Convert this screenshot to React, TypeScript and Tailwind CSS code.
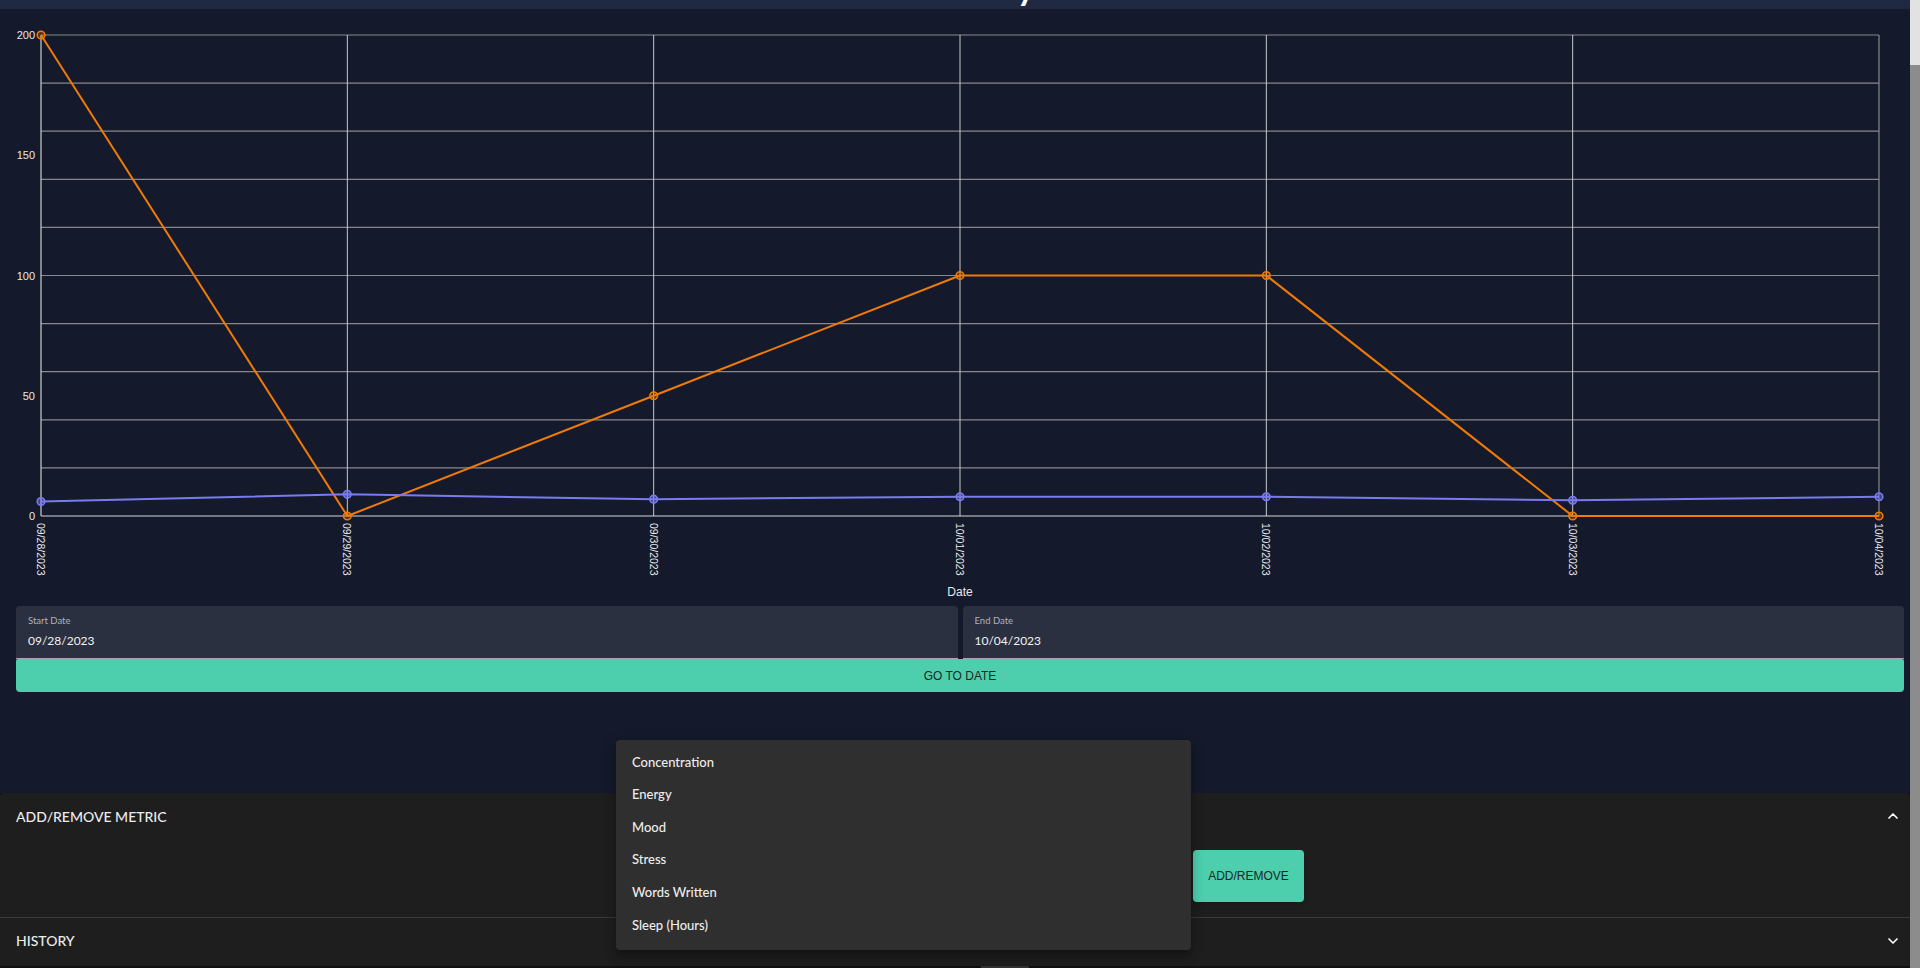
import { ChevronDown, ChevronUp } from "lucide-react";

// chart geometry, in page pixels
const X = [41, 347.33, 653.67, 960, 1266.33, 1572.67, 1879];
const TOP = 35;
const BASE = 516;
const PER_UNIT = (BASE - TOP) / 200;
const yFor = (v: number) => BASE - v * PER_UNIT;

const DATES = ["09/28/2023", "09/29/2023", "09/30/2023", "10/01/2023", "10/02/2023", "10/03/2023", "10/04/2023"];
const SERIES = [
  { color: "#ef7a06", fill: "rgba(239,122,6,0.25)", values: [200, 0, 50, 100, 100, 0, 0] },
  { color: "#7a7af0", fill: "rgba(122,122,240,0.45)", values: [6, 9, 7, 8, 8, 6.5, 8] },
];
const METRICS = ["Concentration", "Energy", "Mood", "Stress", "Words Written", "Sleep (Hours)"];

const chartFont = '"Liberation Sans", Arial, sans-serif';

function LineChart() {
  const hLines = Array.from({ length: 10 }, (_, k) => TOP + k * ((BASE - TOP) / 10));
  return (
    <svg width="1910" height="597" viewBox="0 9 1910 597" className="block shrink-0">
      {/* horizontal grid */}
      {hLines.map((y) => (
        <line key={y} x1={X[0]} x2={X[6]} y1={y} y2={y} stroke="#87878c" strokeWidth="1.2" />
      ))}
      {/* vertical grid */}
      {X.slice(1, 6).map((x) => (
        <line key={x} x1={x} x2={x} y1={TOP} y2={BASE} stroke="#c9c9cc" strokeWidth="1" />
      ))}
      <line x1={X[6]} x2={X[6]} y1={TOP} y2={BASE} stroke="#87878c" strokeWidth="1.2" />
      {/* axes */}
      <line x1={X[0]} x2={X[0]} y1={TOP} y2={BASE} stroke="#cfcfd2" strokeWidth="1.2" />
      <line x1={X[0]} x2={X[6]} y1={BASE} y2={BASE} stroke="#d6d6d8" strokeWidth="1.2" />

      {/* y ticks */}
      {[0, 50, 100, 150, 200].map((v) => (
        <text
          key={v}
          x={35}
          y={yFor(v)}
          textAnchor="end"
          dominantBaseline="central"
          fontSize="11"
          fontFamily={chartFont}
          fill="#e8e8ec"
        >
          {v}
        </text>
      ))}

      {/* x ticks */}
      {DATES.map((d, i) => (
        <text
          key={d}
          transform={`translate(${X[i]},523) rotate(90)`}
          dominantBaseline="central"
          fontSize="10.5"
          fontFamily={chartFont}
          fill="#e8e8ec"
        >
          {d}
        </text>
      ))}
      <text x={960} y={592} textAnchor="middle" dominantBaseline="central" fontSize="12" fontFamily={chartFont} fill="#e8e8ec">
        Date
      </text>

      {/* series */}
      {SERIES.map((s) => (
        <g key={s.color}>
          <polyline
            points={s.values.map((v, i) => `${X[i]},${yFor(v)}`).join(" ")}
            fill="none"
            stroke={s.color}
            strokeWidth="2"
            strokeLinejoin="round"
          />
          {s.values.map((v, i) => (
            <circle key={i} cx={X[i]} cy={yFor(v)} r="3.8" fill={s.fill} stroke={s.color} strokeWidth="1.6" />
          ))}
        </g>
      ))}
    </svg>
  );
}

function DateField({ label, value }: { label: string; value: string }) {
  return (
    <div className="flex-1 h-[53px] bg-[#2a3040] rounded-t-[4px] border-b border-[#a3a6ad] px-3 pt-[9px]">
      <div className="text-[9.5px] leading-[12px] text-[#aeb2bc]">{label}</div>
      <div className="mt-[6px] text-[12px] leading-[16px] text-[#f2f2f2]">{value}</div>
    </div>
  );
}

export default function App() {
  return (
    <div className="relative h-screen w-full overflow-hidden flex bg-[#101010]" style={{ fontFamily: 'Lato, "Noto Sans", sans-serif' }}>
      <div className="flex-1 min-w-0 flex flex-col">
        <div className="flex flex-col bg-[#141a2b]">
          {/* page header, mostly scrolled out of view */}
          <header className="h-[70px] -mt-[61px] bg-[#1f2942] flex items-end justify-center pl-[14px] pb-[5px] overflow-hidden">
            <h1 className="text-[35px] leading-none font-bold text-white">Summary</h1>
          </header>

          <LineChart />

          {/* date range */}
          <div className="flex gap-[5px] pl-4 pr-[6px]">
            <DateField label="Start Date" value="09/28/2023" />
            <DateField label="End Date" value="10/04/2023" />
          </div>
          <button
            className="ml-4 mr-[6px] h-[33px] bg-[#4dcfad] rounded-b-[4px] rounded-t-[2px] text-[12px] text-[#1b2724]"
            style={{ fontFamily: chartFont }}
          >
            GO TO DATE
          </button>
          <div className="h-[101px]" />
        </div>

        {/* accordions */}
        <div className="bg-[#1e1e1e] rounded-t-[4px] text-[#ececec]">
          <div className="h-[48px] flex items-center justify-between pl-4 pr-[9px] pb-[2px]">
            <span className="text-[14px] font-medium">ADD/REMOVE METRIC</span>
            <ChevronUp size={16} strokeWidth={2.5} className="text-white" />
          </div>
          <div className="h-[76px] flex justify-center items-start gap-[2px] pt-[9px] pl-[10px]">
            <div className="w-[575px] h-[52px]" />
            <button
              className="w-[111px] h-[52px] bg-[#4dcfad] rounded-[4px] shadow-md text-[12px] text-[#1b2724]"
              style={{ fontFamily: chartFont }}
            >
              ADD/REMOVE
            </button>
          </div>
          <div className="h-px bg-[#3a3a3a]" />
          <div className="h-[48px] flex items-center justify-between pl-4 pr-[9px] pb-[3px]">
            <span className="text-[14px] font-medium">HISTORY</span>
            <ChevronDown size={16} strokeWidth={2.5} className="text-white" />
          </div>
        </div>
        <div className="h-[2px] flex">
          <div className="ml-[981px] w-[48px] bg-[#333]" />
        </div>
      </div>

      {/* scrollbar */}
      <div className="w-[10px] shrink-0 bg-[#e2e2e2] flex flex-col">
        <div className="mt-[65px] flex-1 bg-[#8c8c8c]" />
      </div>

      {/* open metric menu */}
      <div className="absolute left-[616px] top-[740px] w-[575px] bg-[#2f2f2f] rounded-[4px] shadow-[0_5px_5px_-3px_rgba(0,0,0,0.2),0_8px_10px_1px_rgba(0,0,0,0.14),0_3px_14px_2px_rgba(0,0,0,0.12)] pt-[6px] pb-[8px]">
        {METRICS.map((m) => (
          <div key={m} className="h-[32.6px] px-4 flex items-center text-[13px] font-medium text-[#ededed]">
            {m}
          </div>
        ))}
      </div>
    </div>
  );
}
